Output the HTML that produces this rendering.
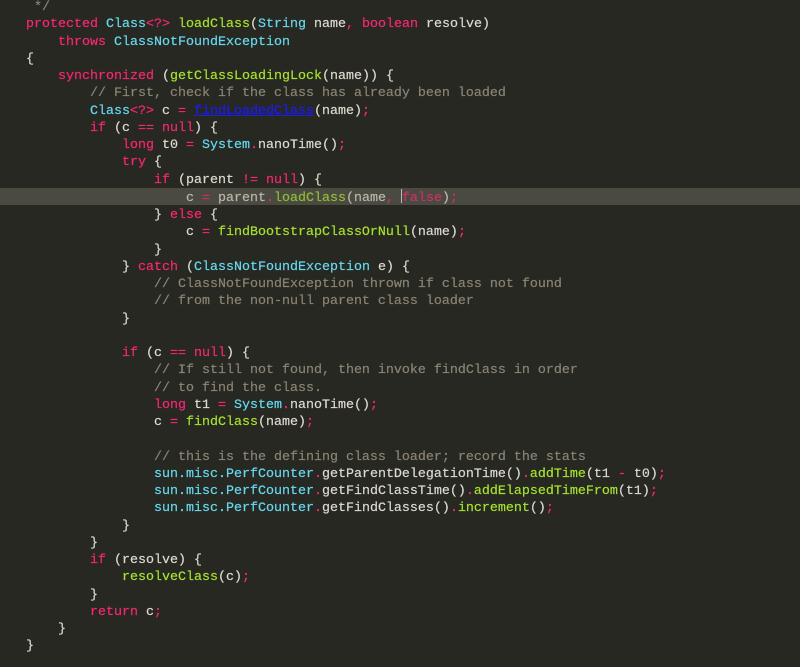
<!DOCTYPE html>
<html><head><style>
html,body{margin:0;padding:0;background:#272822;width:800px;height:667px;overflow:hidden}
pre{margin:0;position:absolute;left:26px;top:-1px;font-family:"Liberation Mono",monospace;font-size:13.33px;line-height:17.25px;color:#dedacf;white-space:pre;-webkit-text-stroke:0.2px}
.k{color:#f92672}.c{color:#66d9ef}.f{color:#a6e22e}.m{color:#8a8474}.u{color:#1a1aff;text-decoration:underline}
.hl{position:absolute;left:0;top:188px;width:800px;height:17px;background:#4a4a40}
.hl2{opacity:.75}
.cur{display:inline-block;width:1px;height:14px;background:#ddd;vertical-align:-2px;margin-left:-1px}
</style></head><body>
<div class="hl"></div>
<pre><span class="m"> */</span>
<span class="k">protected</span> <span class="c">Class</span><span class="k">&lt;?&gt;</span> <span class="f">loadClass</span>(<span class="c">String</span> name<span class="k">,</span> <span class="k">boolean</span> resolve)
    <span class="k">throws</span> <span class="c">ClassNotFoundException</span>
{
    <span class="k">synchronized</span> (<span class="f">getClassLoadingLock</span>(name)) {
        <span class="m">// First, check if the class has already been loaded</span>
        <span class="c">Class</span><span class="k">&lt;?&gt;</span> c <span class="k">=</span> <span class="u">findLoadedClass</span>(name)<span class="k">;</span>
        <span class="k">if</span> (c <span class="k">==</span> <span class="k">null</span>) {
            <span class="k">long</span> t0 <span class="k">=</span> <span class="c">System</span><span class="k">.</span>nanoTime()<span class="k">;</span>
            <span class="k">try</span> {
                <span class="k">if</span> (parent <span class="k">!=</span> <span class="k">null</span>) {
<span class="hl2">                    c <span class="k">=</span> parent<span class="k">.</span><span class="f">loadClass</span>(name<span class="k">,</span> <span class="cur"></span><span class="k">false</span>)<span class="k">;</span></span>
                } <span class="k">else</span> {
                    c <span class="k">=</span> <span class="f">findBootstrapClassOrNull</span>(name)<span class="k">;</span>
                }
            } <span class="k">catch</span> (<span class="c">ClassNotFoundException</span> e) {
                <span class="m">// ClassNotFoundException thrown if class not found</span>
                <span class="m">// from the non-null parent class loader</span>
            }

            <span class="k">if</span> (c <span class="k">==</span> <span class="k">null</span>) {
                <span class="m">// If still not found, then invoke findClass in order</span>
                <span class="m">// to find the class.</span>
                <span class="k">long</span> t1 <span class="k">=</span> <span class="c">System</span><span class="k">.</span>nanoTime()<span class="k">;</span>
                c <span class="k">=</span> <span class="f">findClass</span>(name)<span class="k">;</span>

                <span class="m">// this is the defining class loader; record the stats</span>
                <span class="c">sun.misc.PerfCounter</span><span class="k">.</span>getParentDelegationTime()<span class="k">.</span><span class="f">addTime</span>(t1 <span class="k">-</span> t0)<span class="k">;</span>
                <span class="c">sun.misc.PerfCounter</span><span class="k">.</span>getFindClassTime()<span class="k">.</span><span class="f">addElapsedTimeFrom</span>(t1)<span class="k">;</span>
                <span class="c">sun.misc.PerfCounter</span><span class="k">.</span>getFindClasses()<span class="k">.</span><span class="f">increment</span>()<span class="k">;</span>
            }
        }
        <span class="k">if</span> (resolve) {
            <span class="f">resolveClass</span>(c)<span class="k">;</span>
        }
        <span class="k">return</span> c<span class="k">;</span>
    }
}</pre>
</body></html>
